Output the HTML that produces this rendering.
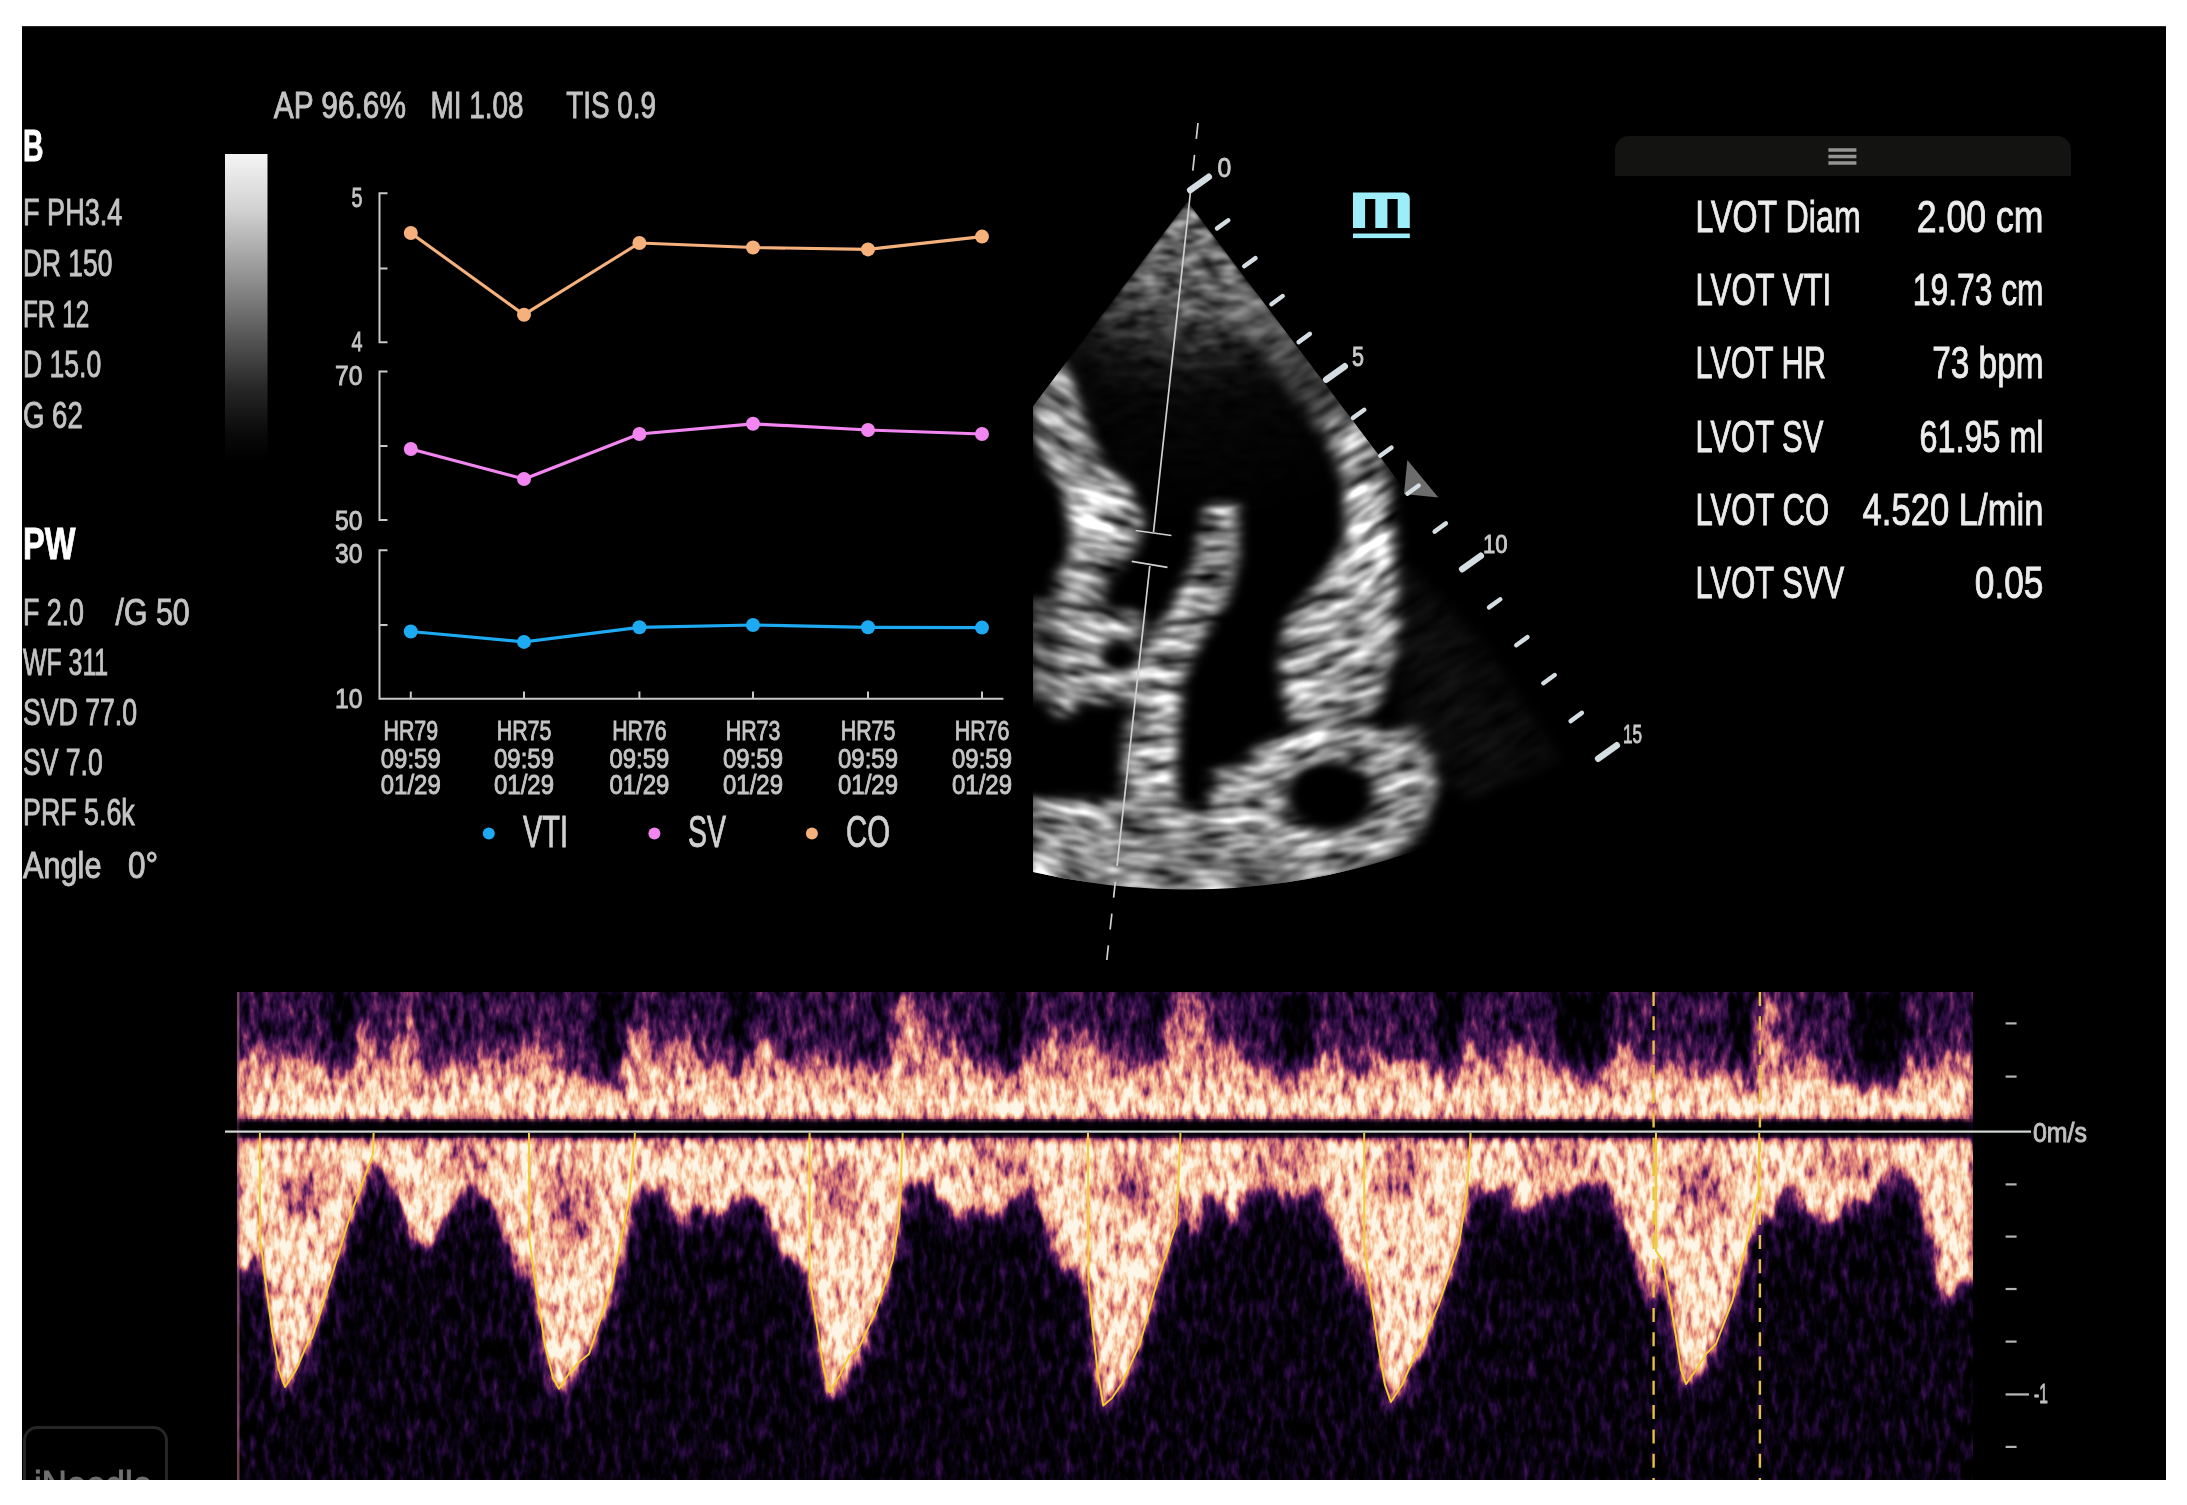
<!DOCTYPE html>
<html><head><meta charset="utf-8"><title>Ultrasound</title>
<style>
html,body{margin:0;padding:0;background:#fff;width:2187px;height:1505px;overflow:hidden}
svg{position:absolute;left:0;top:0;display:block}
text{font-family:"Liberation Sans",sans-serif;stroke-width:0.9px;paint-order:stroke}
</style></head><body>
<svg width="2187" height="1505" viewBox="0 0 2187 1505">
<defs><clipPath id="scr"><rect x="22" y="26" width="2144" height="1454"/></clipPath></defs>
<rect x="22" y="26" width="2144" height="1454" fill="#000"/>
<g clip-path="url(#scr)">
<defs>
<clipPath id="sect"><path d="M1187.5,201.5 L1033.0,406.5 L1033,871.9 A688,688 0 0 0 1601.5,751.0 Z"/></clipPath>
<radialGradient id="nearf" cx="1187.5" cy="201.5" r="330" gradientUnits="userSpaceOnUse">
<stop offset="0" stop-color="#7a7a7a"/><stop offset="0.2" stop-color="#646464"/><stop offset="0.32" stop-color="#505050"/><stop offset="0.42" stop-color="#2e2e2e"/><stop offset="0.52" stop-color="#121212"/><stop offset="0.62" stop-color="#060606"/><stop offset="1" stop-color="#000"/></radialGradient>
<filter id="eblur" x="800" y="0" width="1200" height="1200" filterUnits="userSpaceOnUse" color-interpolation-filters="sRGB"><feGaussianBlur stdDeviation="7 5"/></filter>
<filter id="etex" x="800" y="0" width="1200" height="1200" filterUnits="userSpaceOnUse" color-interpolation-filters="sRGB">
<feTurbulence type="fractalNoise" baseFrequency="0.026 0.075" numOctaves="2" seed="11" result="n"/>
<feColorMatrix in="n" type="matrix" values="1 0 0 0 0 1 0 0 0 0 1 0 0 0 0 0 0 0 0 1" result="ng"/>
<feComposite in="SourceGraphic" in2="ng" operator="arithmetic" k1="2.5" k2="-0.22" k3="0" k4="0"/>
<feColorMatrix type="matrix" values="1 0 0 0 0 0 1 0 0 0 0 0 1 0 0 0 0 0 0 1"/>
</filter>
<filter id="nftex" x="1020" y="190" width="600" height="720" filterUnits="userSpaceOnUse" color-interpolation-filters="sRGB">
<feTurbulence type="fractalNoise" baseFrequency="0.05 0.1" numOctaves="2" seed="5" result="n"/>
<feColorMatrix in="n" type="matrix" values="1 0 0 0 0 1 0 0 0 0 1 0 0 0 0 0 0 0 0 1" result="ng"/>
<feComposite in="SourceGraphic" in2="ng" operator="arithmetic" k1="2.6" k2="-0.3" k3="0" k4="0"/>
<feGaussianBlur stdDeviation="2 1.2"/>
</filter>
</defs>
<defs><filter id="mblur" x="800" y="0" width="1200" height="1200" filterUnits="userSpaceOnUse"><feGaussianBlur stdDeviation="10"/></filter><mask id="wdg1" maskUnits="userSpaceOnUse" x="800" y="0" width="1200" height="1200"><polygon points="1187.5,181.5 728.3,1310.2 1030.9,1391.2" fill="#fff" filter="url(#mblur)"/></mask><mask id="wdg2" maskUnits="userSpaceOnUse" x="800" y="0" width="1200" height="1200"><polygon points="1187.5,181.5 1344.1,1391.2 1646.7,1310.2" fill="#fff" filter="url(#mblur)"/></mask><mask id="wdg3" maskUnits="userSpaceOnUse" x="800" y="0" width="1200" height="1200"><polygon points="1187.5,181.5 148.3,801.5 728.3,1310.2" fill="#fff" filter="url(#mblur)"/></mask><mask id="wdg4" maskUnits="userSpaceOnUse" x="800" y="0" width="1200" height="1200"><polygon points="1187.5,181.5 1646.7,1310.2 2226.7,801.5" fill="#fff" filter="url(#mblur)"/></mask></defs>
<g clip-path="url(#sect)">
<g><g transform="rotate(0,1187.5,201.5)"><g filter="url(#etex)">
<g filter="url(#eblur)">
<rect x="800" y="0" width="1200" height="1200" fill="#000"/>
<g transform="rotate(0,1187.5,201.5)">
<polygon points="1230,290 1300,290 1400,440 1369,470 1320,430 1260,350 1228,320" fill="#3a3a3a"/>
<polygon points="1034,357 1034,440 1048,470 1060,490 1070,520 1070,552 1056,580 1054,612 1100,612 1106,582 1134,552 1143,520 1128,488 1098,455 1085,420 1075,385 1055,350" fill="#828282"/>
<polygon points="1070,480 1126,482 1142,520 1132,550 1080,552 1068,520" fill="#b6b6b6"/>
<polygon points="1054,608 1141,612 1141,700 1100,704 1060,700 1048,660" fill="#919191"/>
<polygon points="1030,600 1058,600 1060,700 1030,700" fill="#505050"/>
<polygon points="1207,505 1236,505 1238,560 1226,600 1200,640 1182,680 1176,740 1176,814 1122,814 1124,740 1136,690 1148,640 1176,600 1195,560" fill="#959595"/>
<polygon points="1320,420 1369,420 1389,480 1395,540 1397,580 1399,620 1395,660 1380,700 1360,722 1290,722 1284,700 1280,660 1286,619 1320,580 1345,540 1345,480" fill="#8f8f8f"/>
<polygon points="1355,480 1385,490 1390,560 1370,600 1345,600 1350,540" fill="#bbbbbb"/>
<polygon points="1399,559 1480,640 1560,760 1470,800 1400,740" fill="#0a0a0a"/>
<polygon points="1030,798 1116,800 1203,808 1240,770 1290,740 1350,725 1420,730 1440,780 1420,840 1380,860 1340,880 1200,900 1030,890" fill="#767676"/>
<polygon points="1030,800 1116,802 1116,880 1030,880" fill="#9c9c9c"/>
<polygon points="1212,770 1299,766 1299,852 1212,852" fill="#a3a3a3"/>
<ellipse cx="1332" cy="792" rx="100" ry="66" fill="#969696"/>
<ellipse cx="1330" cy="796" rx="45" ry="36" fill="#000"/>
<ellipse cx="1063" cy="709" rx="11" ry="9" fill="#a8a8a8"/>
<ellipse cx="1222" cy="511" rx="16" ry="7" fill="#c8c8c8"/>
<ellipse cx="1120" cy="656" rx="20" ry="16" fill="#000"/>
</g></g>
</g></g></g>
<g mask="url(#wdg1)"><g transform="rotate(15,1187.5,201.5)"><g filter="url(#etex)">
<g filter="url(#eblur)">
<rect x="800" y="0" width="1200" height="1200" fill="#000"/>
<g transform="rotate(-15,1187.5,201.5)">
<polygon points="1230,290 1300,290 1400,440 1369,470 1320,430 1260,350 1228,320" fill="#3a3a3a"/>
<polygon points="1034,357 1034,440 1048,470 1060,490 1070,520 1070,552 1056,580 1054,612 1100,612 1106,582 1134,552 1143,520 1128,488 1098,455 1085,420 1075,385 1055,350" fill="#828282"/>
<polygon points="1070,480 1126,482 1142,520 1132,550 1080,552 1068,520" fill="#b6b6b6"/>
<polygon points="1054,608 1141,612 1141,700 1100,704 1060,700 1048,660" fill="#919191"/>
<polygon points="1030,600 1058,600 1060,700 1030,700" fill="#505050"/>
<polygon points="1207,505 1236,505 1238,560 1226,600 1200,640 1182,680 1176,740 1176,814 1122,814 1124,740 1136,690 1148,640 1176,600 1195,560" fill="#959595"/>
<polygon points="1320,420 1369,420 1389,480 1395,540 1397,580 1399,620 1395,660 1380,700 1360,722 1290,722 1284,700 1280,660 1286,619 1320,580 1345,540 1345,480" fill="#8f8f8f"/>
<polygon points="1355,480 1385,490 1390,560 1370,600 1345,600 1350,540" fill="#bbbbbb"/>
<polygon points="1399,559 1480,640 1560,760 1470,800 1400,740" fill="#0a0a0a"/>
<polygon points="1030,798 1116,800 1203,808 1240,770 1290,740 1350,725 1420,730 1440,780 1420,840 1380,860 1340,880 1200,900 1030,890" fill="#767676"/>
<polygon points="1030,800 1116,802 1116,880 1030,880" fill="#9c9c9c"/>
<polygon points="1212,770 1299,766 1299,852 1212,852" fill="#a3a3a3"/>
<ellipse cx="1332" cy="792" rx="100" ry="66" fill="#969696"/>
<ellipse cx="1330" cy="796" rx="45" ry="36" fill="#000"/>
<ellipse cx="1063" cy="709" rx="11" ry="9" fill="#a8a8a8"/>
<ellipse cx="1222" cy="511" rx="16" ry="7" fill="#c8c8c8"/>
<ellipse cx="1120" cy="656" rx="20" ry="16" fill="#000"/>
</g></g>
</g></g></g>
<g mask="url(#wdg2)"><g transform="rotate(-15,1187.5,201.5)"><g filter="url(#etex)">
<g filter="url(#eblur)">
<rect x="800" y="0" width="1200" height="1200" fill="#000"/>
<g transform="rotate(15,1187.5,201.5)">
<polygon points="1230,290 1300,290 1400,440 1369,470 1320,430 1260,350 1228,320" fill="#3a3a3a"/>
<polygon points="1034,357 1034,440 1048,470 1060,490 1070,520 1070,552 1056,580 1054,612 1100,612 1106,582 1134,552 1143,520 1128,488 1098,455 1085,420 1075,385 1055,350" fill="#828282"/>
<polygon points="1070,480 1126,482 1142,520 1132,550 1080,552 1068,520" fill="#b6b6b6"/>
<polygon points="1054,608 1141,612 1141,700 1100,704 1060,700 1048,660" fill="#919191"/>
<polygon points="1030,600 1058,600 1060,700 1030,700" fill="#505050"/>
<polygon points="1207,505 1236,505 1238,560 1226,600 1200,640 1182,680 1176,740 1176,814 1122,814 1124,740 1136,690 1148,640 1176,600 1195,560" fill="#959595"/>
<polygon points="1320,420 1369,420 1389,480 1395,540 1397,580 1399,620 1395,660 1380,700 1360,722 1290,722 1284,700 1280,660 1286,619 1320,580 1345,540 1345,480" fill="#8f8f8f"/>
<polygon points="1355,480 1385,490 1390,560 1370,600 1345,600 1350,540" fill="#bbbbbb"/>
<polygon points="1399,559 1480,640 1560,760 1470,800 1400,740" fill="#0a0a0a"/>
<polygon points="1030,798 1116,800 1203,808 1240,770 1290,740 1350,725 1420,730 1440,780 1420,840 1380,860 1340,880 1200,900 1030,890" fill="#767676"/>
<polygon points="1030,800 1116,802 1116,880 1030,880" fill="#9c9c9c"/>
<polygon points="1212,770 1299,766 1299,852 1212,852" fill="#a3a3a3"/>
<ellipse cx="1332" cy="792" rx="100" ry="66" fill="#969696"/>
<ellipse cx="1330" cy="796" rx="45" ry="36" fill="#000"/>
<ellipse cx="1063" cy="709" rx="11" ry="9" fill="#a8a8a8"/>
<ellipse cx="1222" cy="511" rx="16" ry="7" fill="#c8c8c8"/>
<ellipse cx="1120" cy="656" rx="20" ry="16" fill="#000"/>
</g></g>
</g></g></g>
<g mask="url(#wdg3)"><g transform="rotate(30,1187.5,201.5)"><g filter="url(#etex)">
<g filter="url(#eblur)">
<rect x="800" y="0" width="1200" height="1200" fill="#000"/>
<g transform="rotate(-30,1187.5,201.5)">
<polygon points="1230,290 1300,290 1400,440 1369,470 1320,430 1260,350 1228,320" fill="#3a3a3a"/>
<polygon points="1034,357 1034,440 1048,470 1060,490 1070,520 1070,552 1056,580 1054,612 1100,612 1106,582 1134,552 1143,520 1128,488 1098,455 1085,420 1075,385 1055,350" fill="#828282"/>
<polygon points="1070,480 1126,482 1142,520 1132,550 1080,552 1068,520" fill="#b6b6b6"/>
<polygon points="1054,608 1141,612 1141,700 1100,704 1060,700 1048,660" fill="#919191"/>
<polygon points="1030,600 1058,600 1060,700 1030,700" fill="#505050"/>
<polygon points="1207,505 1236,505 1238,560 1226,600 1200,640 1182,680 1176,740 1176,814 1122,814 1124,740 1136,690 1148,640 1176,600 1195,560" fill="#959595"/>
<polygon points="1320,420 1369,420 1389,480 1395,540 1397,580 1399,620 1395,660 1380,700 1360,722 1290,722 1284,700 1280,660 1286,619 1320,580 1345,540 1345,480" fill="#8f8f8f"/>
<polygon points="1355,480 1385,490 1390,560 1370,600 1345,600 1350,540" fill="#bbbbbb"/>
<polygon points="1399,559 1480,640 1560,760 1470,800 1400,740" fill="#0a0a0a"/>
<polygon points="1030,798 1116,800 1203,808 1240,770 1290,740 1350,725 1420,730 1440,780 1420,840 1380,860 1340,880 1200,900 1030,890" fill="#767676"/>
<polygon points="1030,800 1116,802 1116,880 1030,880" fill="#9c9c9c"/>
<polygon points="1212,770 1299,766 1299,852 1212,852" fill="#a3a3a3"/>
<ellipse cx="1332" cy="792" rx="100" ry="66" fill="#969696"/>
<ellipse cx="1330" cy="796" rx="45" ry="36" fill="#000"/>
<ellipse cx="1063" cy="709" rx="11" ry="9" fill="#a8a8a8"/>
<ellipse cx="1222" cy="511" rx="16" ry="7" fill="#c8c8c8"/>
<ellipse cx="1120" cy="656" rx="20" ry="16" fill="#000"/>
</g></g>
</g></g></g>
<g mask="url(#wdg4)"><g transform="rotate(-30,1187.5,201.5)"><g filter="url(#etex)">
<g filter="url(#eblur)">
<rect x="800" y="0" width="1200" height="1200" fill="#000"/>
<g transform="rotate(30,1187.5,201.5)">
<polygon points="1230,290 1300,290 1400,440 1369,470 1320,430 1260,350 1228,320" fill="#3a3a3a"/>
<polygon points="1034,357 1034,440 1048,470 1060,490 1070,520 1070,552 1056,580 1054,612 1100,612 1106,582 1134,552 1143,520 1128,488 1098,455 1085,420 1075,385 1055,350" fill="#828282"/>
<polygon points="1070,480 1126,482 1142,520 1132,550 1080,552 1068,520" fill="#b6b6b6"/>
<polygon points="1054,608 1141,612 1141,700 1100,704 1060,700 1048,660" fill="#919191"/>
<polygon points="1030,600 1058,600 1060,700 1030,700" fill="#505050"/>
<polygon points="1207,505 1236,505 1238,560 1226,600 1200,640 1182,680 1176,740 1176,814 1122,814 1124,740 1136,690 1148,640 1176,600 1195,560" fill="#959595"/>
<polygon points="1320,420 1369,420 1389,480 1395,540 1397,580 1399,620 1395,660 1380,700 1360,722 1290,722 1284,700 1280,660 1286,619 1320,580 1345,540 1345,480" fill="#8f8f8f"/>
<polygon points="1355,480 1385,490 1390,560 1370,600 1345,600 1350,540" fill="#bbbbbb"/>
<polygon points="1399,559 1480,640 1560,760 1470,800 1400,740" fill="#0a0a0a"/>
<polygon points="1030,798 1116,800 1203,808 1240,770 1290,740 1350,725 1420,730 1440,780 1420,840 1380,860 1340,880 1200,900 1030,890" fill="#767676"/>
<polygon points="1030,800 1116,802 1116,880 1030,880" fill="#9c9c9c"/>
<polygon points="1212,770 1299,766 1299,852 1212,852" fill="#a3a3a3"/>
<ellipse cx="1332" cy="792" rx="100" ry="66" fill="#969696"/>
<ellipse cx="1330" cy="796" rx="45" ry="36" fill="#000"/>
<ellipse cx="1063" cy="709" rx="11" ry="9" fill="#a8a8a8"/>
<ellipse cx="1222" cy="511" rx="16" ry="7" fill="#c8c8c8"/>
<ellipse cx="1120" cy="656" rx="20" ry="16" fill="#000"/>
</g></g>
</g></g></g>
</g>
<g clip-path="url(#sect)" style="mix-blend-mode:screen"><g filter="url(#nftex)">
<rect x="1020" y="190" width="600" height="720" fill="#000"/><path d="M1187.5,201.5 L1033.0,406.5 L1033,871.9 A688,688 0 0 0 1601.5,751.0 Z" fill="url(#nearf)"/>
</g></g>
<g stroke="#d0d0d0" stroke-width="1.7" fill="none">
<path d="M1189.6,200 L1153.5,532"/>
<path d="M1149.8,566 L1118.8,850"/>
<path d="M1198.0,123 L1189.6,200 M1118.8,850 L1106.8,960" stroke-dasharray="16 16"/>
<path d="M1135.6,530.5 L1171.5,535.5 M1131.7,561.4 L1167.5,567.4"/>
</g>
<polygon points="1407.3,460 1438.4,497.5 1404,494" fill="#6c6c6c"/>
<g stroke="#d4dde2" stroke-linecap="round">
<path d="M1190.2,190.2 L1208.8,176.8" stroke-width="6.5"/>
<path d="M1217.0,228.4 L1228.3,220.2" stroke-width="4.4"/>
<path d="M1244.2,266.3 L1255.5,258.1" stroke-width="4.4"/>
<path d="M1271.4,304.2 L1282.7,296.0" stroke-width="4.4"/>
<path d="M1298.6,342.1 L1309.9,333.9" stroke-width="4.4"/>
<path d="M1326.2,379.7 L1344.8,366.3" stroke-width="6.5"/>
<path d="M1353.0,417.9 L1364.3,409.7" stroke-width="4.4"/>
<path d="M1380.2,455.8 L1391.5,447.6" stroke-width="4.4"/>
<path d="M1407.4,493.7 L1418.7,485.5" stroke-width="4.4"/>
<path d="M1434.6,531.6 L1445.9,523.4" stroke-width="4.4"/>
<path d="M1462.2,569.2 L1480.8,555.8" stroke-width="6.5"/>
<path d="M1489.0,607.4 L1500.3,599.2" stroke-width="4.4"/>
<path d="M1516.2,645.3 L1527.5,637.1" stroke-width="4.4"/>
<path d="M1543.4,683.2 L1554.7,675.0" stroke-width="4.4"/>
<path d="M1570.6,721.1 L1581.9,712.9" stroke-width="4.4"/>
<path d="M1598.2,758.7 L1616.8,745.3" stroke-width="6.5"/>
</g>
<defs>
<filter id="dmap" x="237" y="992" width="1736" height="488" filterUnits="userSpaceOnUse" color-interpolation-filters="sRGB">
<feTurbulence type="fractalNoise" baseFrequency="0.14 0.05" numOctaves="3" seed="7" result="n"/>
<feColorMatrix in="n" type="matrix" values="1 0 0 0 0 1 0 0 0 0 1 0 0 0 0 0 0 0 0 1" result="ng"/>
<feComposite in="SourceGraphic" in2="ng" operator="arithmetic" k1="0.7" k2="0.65" k3="0.55" k4="-0.275" result="c"/>
<feComponentTransfer in="c">
<feFuncR type="table" tableValues="0.000 0.047 0.141 0.251 0.416 0.627 0.816 0.922 0.965 0.984 0.996"/><feFuncG type="table" tableValues="0.000 0.016 0.039 0.082 0.145 0.282 0.439 0.604 0.753 0.878 0.961"/><feFuncB type="table" tableValues="0.000 0.086 0.220 0.314 0.376 0.439 0.459 0.510 0.604 0.753 0.902"/>
<feFuncA type="linear" slope="0" intercept="1"/></feComponentTransfer>
</filter>
<filter id="db1" x="-5%" y="-5%" width="110%" height="110%" color-interpolation-filters="sRGB"><feGaussianBlur stdDeviation="4 5"/></filter>
<filter id="db3" x="-50%" y="-50%" width="200%" height="200%" color-interpolation-filters="sRGB"><feGaussianBlur stdDeviation="11"/></filter>
<filter id="db2" x="-10%" y="-20%" width="120%" height="140%" color-interpolation-filters="sRGB"><feGaussianBlur stdDeviation="12"/></filter>
<linearGradient id="ugrad" x1="0" y1="992" x2="0" y2="1118" gradientUnits="userSpaceOnUse">
<stop offset="0" stop-color="#888888"/><stop offset="0.6" stop-color="#b0b0b0"/><stop offset="1" stop-color="#f2f2f2"/></linearGradient>
<clipPath id="dclip"><rect x="237" y="992" width="1736" height="488"/></clipPath>
</defs>
<g clip-path="url(#dclip)"><g filter="url(#dmap)">
<rect x="237" y="992" width="1736" height="488" fill="#101010"/>
<rect x="237" y="992" width="1736" height="130" fill="#3a3a3a"/>
<g filter="url(#db1)"><polygon points="330.0,992.0 357.0,992.0 357.0,1075.0 335.0,1070.0" fill="#000"/><polygon points="597.0,992.0 628.0,992.0 628.0,1090.0 600.0,1085.0" fill="#000"/><polygon points="729.0,992.0 751.0,992.0 750.0,1075.0 732.0,1070.0" fill="#000"/><polygon points="876.0,992.0 896.0,992.0 896.0,1070.0 880.0,1068.0" fill="#000"/><polygon points="997.0,992.0 1022.0,992.0 1020.0,1075.0 1000.0,1075.0" fill="#000"/><polygon points="1147.0,992.0 1173.0,992.0 1173.0,1065.0 1150.0,1065.0" fill="#000"/><polygon points="1279.0,992.0 1312.0,992.0 1310.0,1075.0 1282.0,1080.0" fill="#000"/><polygon points="1438.0,992.0 1464.0,992.0 1463.0,1085.0 1440.0,1070.0" fill="#000"/><polygon points="1554.0,992.0 1609.0,992.0 1605.0,1085.0 1560.0,1065.0" fill="#000"/><polygon points="1729.0,992.0 1758.0,992.0 1757.0,1085.0 1732.0,1078.0" fill="#000"/><polygon points="1852.0,992.0 1905.0,992.0 1903.0,1088.0 1858.0,1082.0" fill="#000"/></g>
<g filter="url(#db2)"><polygon points="237.0,1139.0 237.0,1274.0 250.0,1271.0 257.0,1250.0 260.0,1237.0 263.0,1260.0 272.0,1320.0 280.0,1375.0 287.0,1395.0 296.0,1370.0 308.0,1345.0 323.0,1304.0 336.0,1260.0 350.0,1217.0 362.0,1185.0 373.0,1164.0 386.0,1171.0 399.0,1198.0 413.0,1238.0 429.0,1251.0 442.0,1218.0 462.6,1191.0 476.0,1181.0 496.0,1211.0 512.5,1251.0 521.0,1281.0 529.0,1250.0 535.0,1290.0 545.0,1350.0 553.0,1385.0 559.0,1394.0 568.0,1385.0 582.0,1360.0 598.0,1330.0 612.0,1294.0 629.0,1224.0 637.0,1184.0 649.0,1191.0 662.0,1178.0 673.0,1218.0 683.0,1224.0 693.0,1198.0 716.5,1218.0 736.4,1198.0 749.7,1191.0 769.7,1218.0 786.3,1257.5 799.6,1261.0 809.6,1277.0 816.0,1317.0 822.0,1360.0 829.5,1400.0 840.0,1385.0 859.4,1357.0 876.0,1310.0 886.0,1284.0 902.6,1204.0 906.0,1184.0 929.0,1178.0 949.0,1211.0 959.0,1221.0 975.7,1201.0 992.0,1218.0 1009.0,1201.0 1029.0,1181.0 1045.5,1218.0 1062.0,1267.5 1075.4,1264.0 1088.0,1284.0 1093.0,1330.0 1098.0,1380.0 1103.0,1405.0 1121.6,1384.0 1139.9,1344.0 1156.5,1284.0 1176.4,1224.0 1181.4,1184.0 1189.7,1224.0 1196.0,1237.6 1206.0,1184.0 1229.6,1211.0 1233.0,1231.0 1246.0,1191.0 1266.0,1178.0 1286.0,1198.0 1309.0,1191.0 1316.0,1181.0 1329.0,1211.0 1346.0,1257.5 1356.0,1290.7 1364.0,1267.5 1375.8,1317.0 1383.0,1370.0 1390.0,1405.0 1400.0,1390.0 1422.0,1350.6 1455.6,1257.5 1469.0,1191.0 1472.0,1184.0 1489.0,1191.0 1505.4,1184.0 1522.0,1217.6 1540.0,1197.7 1563.0,1191.0 1586.0,1184.0 1606.0,1178.0 1619.7,1211.0 1633.0,1244.0 1646.0,1290.6 1654.5,1304.0 1660.0,1265.0 1666.0,1274.0 1676.0,1337.0 1686.0,1390.0 1712.7,1350.0 1736.0,1290.6 1759.0,1211.0 1772.5,1224.0 1776.0,1197.6 1786.0,1184.0 1809.0,1211.0 1832.0,1224.0 1852.0,1197.6 1872.0,1201.0 1888.7,1171.0 1905.0,1171.0 1918.7,1191.0 1932.0,1237.5 1942.0,1304.0 1952.0,1290.6 1965.0,1277.0 1973.0,1290.0 1973.0,1139.0" fill="#5a5a5a" transform="translate(0,10)"/><polygon points="237.0,1118.0 237.0,1067.0 257.0,1048.0 271.0,1067.0 290.0,1054.0 312.0,1062.0 334.0,1075.5 351.0,1081.0 358.0,1026.0 368.0,1026.0 378.0,1067.0 394.6,1054.0 405.0,1003.0 411.0,1003.0 419.0,1081.0 438.5,1075.5 449.5,1062.0 466.0,1073.0 485.0,1054.0 504.0,1067.0 521.0,1054.0 540.0,1040.0 559.0,1067.0 581.0,1075.5 600.0,1089.0 619.6,1095.0 629.0,1026.0 645.0,1030.0 658.0,1067.0 668.0,1060.0 680.0,1033.0 702.0,1067.0 724.0,1062.0 742.0,1081.0 753.0,1050.0 762.0,1035.0 779.0,1062.0 797.0,1074.0 812.0,1055.0 832.0,1067.0 860.0,1075.0 887.0,1075.5 897.0,996.0 912.0,996.0 936.0,1054.0 950.0,1040.0 983.0,1075.5 1010.0,1081.0 1021.0,1067.0 1038.0,1054.0 1051.5,1026.0 1068.0,1067.0 1079.0,1034.0 1101.0,1054.0 1130.0,1070.0 1161.0,1067.0 1174.0,993.0 1197.0,993.0 1216.0,1062.0 1230.0,1040.0 1246.5,1067.0 1265.7,1075.5 1285.0,1084.0 1306.8,1075.5 1323.0,1054.0 1339.7,1059.0 1353.5,1084.0 1375.4,1054.0 1394.6,1067.0 1416.6,1062.0 1438.5,1073.0 1457.7,1089.0 1465.0,1032.0 1477.0,1054.0 1493.0,1073.0 1515.0,1045.0 1531.8,1054.0 1553.7,1067.0 1575.7,1081.0 1597.6,1089.0 1614.0,1062.0 1625.0,1040.0 1641.5,1067.0 1658.0,1073.0 1674.4,1062.0 1696.4,1081.0 1718.3,1067.0 1740.3,1081.0 1756.0,1091.0 1759.0,998.0 1776.0,1003.0 1785.0,1071.0 1799.5,1065.0 1808.7,1038.0 1819.0,1065.0 1832.6,1084.5 1859.0,1091.0 1899.0,1091.0 1907.0,1058.0 1918.8,1065.0 1932.0,1078.0 1952.0,1051.0 1973.0,1058.0 1973.0,1118.0" fill="#707070" transform="translate(0,-12)"/></g>
<g filter="url(#db1)"><polygon points="237.0,1139.0 237.0,1274.0 250.0,1271.0 257.0,1250.0 260.0,1237.0 263.0,1260.0 272.0,1320.0 280.0,1375.0 287.0,1395.0 296.0,1370.0 308.0,1345.0 323.0,1304.0 336.0,1260.0 350.0,1217.0 362.0,1185.0 373.0,1164.0 386.0,1171.0 399.0,1198.0 413.0,1238.0 429.0,1251.0 442.0,1218.0 462.6,1191.0 476.0,1181.0 496.0,1211.0 512.5,1251.0 521.0,1281.0 529.0,1250.0 535.0,1290.0 545.0,1350.0 553.0,1385.0 559.0,1394.0 568.0,1385.0 582.0,1360.0 598.0,1330.0 612.0,1294.0 629.0,1224.0 637.0,1184.0 649.0,1191.0 662.0,1178.0 673.0,1218.0 683.0,1224.0 693.0,1198.0 716.5,1218.0 736.4,1198.0 749.7,1191.0 769.7,1218.0 786.3,1257.5 799.6,1261.0 809.6,1277.0 816.0,1317.0 822.0,1360.0 829.5,1400.0 840.0,1385.0 859.4,1357.0 876.0,1310.0 886.0,1284.0 902.6,1204.0 906.0,1184.0 929.0,1178.0 949.0,1211.0 959.0,1221.0 975.7,1201.0 992.0,1218.0 1009.0,1201.0 1029.0,1181.0 1045.5,1218.0 1062.0,1267.5 1075.4,1264.0 1088.0,1284.0 1093.0,1330.0 1098.0,1380.0 1103.0,1405.0 1121.6,1384.0 1139.9,1344.0 1156.5,1284.0 1176.4,1224.0 1181.4,1184.0 1189.7,1224.0 1196.0,1237.6 1206.0,1184.0 1229.6,1211.0 1233.0,1231.0 1246.0,1191.0 1266.0,1178.0 1286.0,1198.0 1309.0,1191.0 1316.0,1181.0 1329.0,1211.0 1346.0,1257.5 1356.0,1290.7 1364.0,1267.5 1375.8,1317.0 1383.0,1370.0 1390.0,1405.0 1400.0,1390.0 1422.0,1350.6 1455.6,1257.5 1469.0,1191.0 1472.0,1184.0 1489.0,1191.0 1505.4,1184.0 1522.0,1217.6 1540.0,1197.7 1563.0,1191.0 1586.0,1184.0 1606.0,1178.0 1619.7,1211.0 1633.0,1244.0 1646.0,1290.6 1654.5,1304.0 1660.0,1265.0 1666.0,1274.0 1676.0,1337.0 1686.0,1390.0 1712.7,1350.0 1736.0,1290.6 1759.0,1211.0 1772.5,1224.0 1776.0,1197.6 1786.0,1184.0 1809.0,1211.0 1832.0,1224.0 1852.0,1197.6 1872.0,1201.0 1888.7,1171.0 1905.0,1171.0 1918.7,1191.0 1932.0,1237.5 1942.0,1304.0 1952.0,1290.6 1965.0,1277.0 1973.0,1290.0 1973.0,1139.0" fill="#e0e0e0"/><polygon points="237.0,1118.0 237.0,1067.0 257.0,1048.0 271.0,1067.0 290.0,1054.0 312.0,1062.0 334.0,1075.5 351.0,1081.0 358.0,1026.0 368.0,1026.0 378.0,1067.0 394.6,1054.0 405.0,1003.0 411.0,1003.0 419.0,1081.0 438.5,1075.5 449.5,1062.0 466.0,1073.0 485.0,1054.0 504.0,1067.0 521.0,1054.0 540.0,1040.0 559.0,1067.0 581.0,1075.5 600.0,1089.0 619.6,1095.0 629.0,1026.0 645.0,1030.0 658.0,1067.0 668.0,1060.0 680.0,1033.0 702.0,1067.0 724.0,1062.0 742.0,1081.0 753.0,1050.0 762.0,1035.0 779.0,1062.0 797.0,1074.0 812.0,1055.0 832.0,1067.0 860.0,1075.0 887.0,1075.5 897.0,996.0 912.0,996.0 936.0,1054.0 950.0,1040.0 983.0,1075.5 1010.0,1081.0 1021.0,1067.0 1038.0,1054.0 1051.5,1026.0 1068.0,1067.0 1079.0,1034.0 1101.0,1054.0 1130.0,1070.0 1161.0,1067.0 1174.0,993.0 1197.0,993.0 1216.0,1062.0 1230.0,1040.0 1246.5,1067.0 1265.7,1075.5 1285.0,1084.0 1306.8,1075.5 1323.0,1054.0 1339.7,1059.0 1353.5,1084.0 1375.4,1054.0 1394.6,1067.0 1416.6,1062.0 1438.5,1073.0 1457.7,1089.0 1465.0,1032.0 1477.0,1054.0 1493.0,1073.0 1515.0,1045.0 1531.8,1054.0 1553.7,1067.0 1575.7,1081.0 1597.6,1089.0 1614.0,1062.0 1625.0,1040.0 1641.5,1067.0 1658.0,1073.0 1674.4,1062.0 1696.4,1081.0 1718.3,1067.0 1740.3,1081.0 1756.0,1091.0 1759.0,998.0 1776.0,1003.0 1785.0,1071.0 1799.5,1065.0 1808.7,1038.0 1819.0,1065.0 1832.6,1084.5 1859.0,1091.0 1899.0,1091.0 1907.0,1058.0 1918.8,1065.0 1932.0,1078.0 1952.0,1051.0 1973.0,1058.0 1973.0,1118.0" fill="url(#ugrad)"/></g>
<g filter="url(#db3)">
<ellipse cx="305" cy="1190" rx="25" ry="30" fill="#8c8c8c"/>
<ellipse cx="571" cy="1205" rx="25" ry="45" fill="#8c8c8c"/>
<ellipse cx="838" cy="1190" rx="22" ry="30" fill="#8c8c8c"/>
<ellipse cx="1133" cy="1185" rx="23" ry="34" fill="#8c8c8c"/>
<ellipse cx="1400" cy="1172" rx="22" ry="30" fill="#8c8c8c"/>
<ellipse cx="1701" cy="1190" rx="25" ry="34" fill="#8c8c8c"/>
<ellipse cx="470" cy="1160" rx="30" ry="14" fill="#8c8c8c"/>
<ellipse cx="1000" cy="1165" rx="35" ry="15" fill="#8c8c8c"/>
<ellipse cx="1280" cy="1160" rx="40" ry="15" fill="#8c8c8c"/>
<ellipse cx="1560" cy="1162" rx="40" ry="14" fill="#8c8c8c"/>
<ellipse cx="1850" cy="1165" rx="40" ry="14" fill="#8c8c8c"/>
</g>
</g></g>
<rect x="237" y="992" width="2.5" height="488" fill="#c07088" opacity="0.55"/>
<g filter="url(#db1)"><rect x="237" y="1120" width="1736" height="17" fill="#000"/></g>
<rect x="225" y="1130.5" width="1806" height="2.2" fill="#d4d8d4"/>
<polyline points="259.9,1133.0 259.9,1237.0 264.0,1270.0 272.0,1330.0 279.0,1370.0 285.0,1387.0 296.0,1370.0 308.0,1342.0 312.0,1338.0 323.0,1304.0 349.6,1217.6 372.9,1154.5 373.6,1133.0" fill="none" stroke="#f2cc30" stroke-width="2" stroke-linejoin="round"/>
<polyline points="529.0,1133.0 529.5,1240.0 535.0,1280.0 545.0,1345.0 553.0,1378.0 559.0,1388.8 570.0,1372.0 579.0,1362.0 589.0,1354.0 612.0,1284.0 628.8,1201.0 634.8,1136.0 634.8,1133.0" fill="none" stroke="#f2cc30" stroke-width="2" stroke-linejoin="round"/>
<polyline points="809.6,1133.0 809.6,1277.0 816.0,1320.0 823.0,1365.0 829.5,1392.0 840.0,1375.0 849.4,1355.5 859.4,1347.0 876.0,1310.7 892.6,1260.8 899.3,1217.6 902.6,1136.0 902.6,1133.0" fill="none" stroke="#f2cc30" stroke-width="2" stroke-linejoin="round"/>
<polyline points="1088.0,1133.0 1088.5,1284.0 1093.0,1330.0 1098.0,1375.0 1103.3,1405.4 1112.0,1398.0 1121.6,1384.0 1139.9,1344.0 1156.5,1284.0 1176.4,1224.0 1180.4,1136.0 1180.4,1133.0" fill="none" stroke="#f2cc30" stroke-width="2" stroke-linejoin="round"/>
<polyline points="1364.2,1133.0 1364.2,1244.0 1370.0,1290.0 1378.0,1345.0 1385.0,1385.0 1390.8,1402.0 1402.0,1385.0 1414.0,1357.0 1419.0,1350.6 1439.0,1304.0 1459.0,1244.0 1467.0,1191.0 1470.5,1136.0 1470.5,1133.0" fill="none" stroke="#f2cc30" stroke-width="2" stroke-linejoin="round"/>
<polyline points="1656.0,1133.0 1656.0,1251.0 1663.0,1261.0 1670.0,1300.0 1676.0,1337.0 1681.0,1370.0 1686.0,1384.0 1696.0,1370.0 1706.0,1354.0 1716.0,1344.0 1732.6,1300.6 1752.6,1217.6 1758.5,1191.0 1759.2,1136.0 1759.2,1133.0" fill="none" stroke="#f2cc30" stroke-width="2" stroke-linejoin="round"/>
<g fill="#b4b4b4">
<rect x="2005.6" y="1022.3" width="11" height="2.2"/>
<rect x="2005.6" y="1075.5" width="11" height="2.2"/>
<rect x="2005.6" y="1183.3" width="11" height="2.2"/>
<rect x="2005.6" y="1235.5" width="11" height="2.2"/>
<rect x="2005.6" y="1287.9" width="11" height="2.2"/>
<rect x="2005.6" y="1340.5" width="11" height="2.2"/>
<rect x="2005.6" y="1445.8" width="11" height="2.2"/>
<rect x="2005.6" y="1393.3" width="23.4" height="2.3"/>
</g>
<g stroke="#e8c040" stroke-width="2.4" stroke-dasharray="14 10.3"><path d="M1653.6,992V1480"/><path d="M1759.9,992V1480"/></g>
<text x="23.00" y="160.70" font-size="44.33" textLength="20.49" lengthAdjust="spacingAndGlyphs" fill="#ffffff" stroke="#ffffff" font-weight="bold" >B</text>
<text x="23.00" y="225.30" font-size="36.34" textLength="99.36" lengthAdjust="spacingAndGlyphs" fill="#c4c4c4" stroke="#c4c4c4" >F PH3.4</text>
<text x="23.00" y="275.50" font-size="36.34" textLength="89.29" lengthAdjust="spacingAndGlyphs" fill="#c4c4c4" stroke="#c4c4c4" >DR 150</text>
<text x="23.00" y="326.90" font-size="36.34" textLength="66.17" lengthAdjust="spacingAndGlyphs" fill="#c4c4c4" stroke="#c4c4c4" >FR 12</text>
<text x="23.00" y="377.20" font-size="36.34" textLength="78.17" lengthAdjust="spacingAndGlyphs" fill="#c4c4c4" stroke="#c4c4c4" >D 15.0</text>
<text x="23.00" y="427.50" font-size="36.34" textLength="59.70" lengthAdjust="spacingAndGlyphs" fill="#c4c4c4" stroke="#c4c4c4" >G 62</text>
<text x="23.00" y="559.00" font-size="44.33" textLength="52.47" lengthAdjust="spacingAndGlyphs" fill="#ffffff" stroke="#ffffff" font-weight="bold" >PW</text>
<text x="23.00" y="624.50" font-size="36.34" textLength="61.02" lengthAdjust="spacingAndGlyphs" fill="#c4c4c4" stroke="#c4c4c4" >F 2.0</text>
<text x="23.00" y="674.70" font-size="36.34" textLength="85.20" lengthAdjust="spacingAndGlyphs" fill="#c4c4c4" stroke="#c4c4c4" >WF 311</text>
<text x="23.00" y="724.90" font-size="36.34" textLength="113.98" lengthAdjust="spacingAndGlyphs" fill="#c4c4c4" stroke="#c4c4c4" >SVD 77.0</text>
<text x="23.00" y="775.10" font-size="36.34" textLength="79.78" lengthAdjust="spacingAndGlyphs" fill="#c4c4c4" stroke="#c4c4c4" >SV 7.0</text>
<text x="23.00" y="825.40" font-size="36.34" textLength="111.75" lengthAdjust="spacingAndGlyphs" fill="#c4c4c4" stroke="#c4c4c4" >PRF 5.6k</text>
<text x="23.00" y="878.40" font-size="36.34" textLength="78.44" lengthAdjust="spacingAndGlyphs" fill="#c4c4c4" stroke="#c4c4c4" >Angle</text>
<text x="115.60" y="624.50" font-size="36.34" textLength="73.99" lengthAdjust="spacingAndGlyphs" fill="#c4c4c4" stroke="#c4c4c4" >/G 50</text>
<text x="127.90" y="878.40" font-size="36.34" textLength="30.11" lengthAdjust="spacingAndGlyphs" fill="#c4c4c4" stroke="#c4c4c4" >0°</text>
<text x="273.80" y="118.40" font-size="36.34" textLength="132.19" lengthAdjust="spacingAndGlyphs" fill="#c4c4c4" stroke="#c4c4c4" >AP 96.6%</text>
<text x="430.50" y="118.40" font-size="36.34" textLength="92.97" lengthAdjust="spacingAndGlyphs" fill="#c4c4c4" stroke="#c4c4c4" >MI 1.08</text>
<text x="566.30" y="118.40" font-size="36.34" textLength="89.72" lengthAdjust="spacingAndGlyphs" fill="#c4c4c4" stroke="#c4c4c4" >TIS 0.9</text>
<defs><linearGradient id="gbar" x1="0" y1="0" x2="0" y2="1">
<stop offset="0" stop-color="#f4f4f4"/><stop offset="0.18" stop-color="#d2d2d2"/>
<stop offset="0.40" stop-color="#929292"/><stop offset="0.62" stop-color="#505050"/>
<stop offset="0.76" stop-color="#282828"/><stop offset="0.91" stop-color="#0a0a0a"/>
<stop offset="1" stop-color="#000"/></linearGradient></defs>
<rect x="225" y="154" width="42.5" height="306" fill="url(#gbar)"/>
<g fill="none" stroke="#c8c8c8" stroke-width="2"><path d="M387.5,193.2H379.5V342.3H387.5M379.5,268.5H387.5"/><path d="M387.5,371.6H379.5V520H387.5M379.5,446H387.5"/><path d="M387.5,550.3H379.5V698.7H1003.4M379.5,625H387.5"/>
<path d="M410.8,691.5V698.7"/>
<path d="M524,691.5V698.7"/>
<path d="M639.4,691.5V698.7"/>
<path d="M753,691.5V698.7"/>
<path d="M868,691.5V698.7"/>
<path d="M982,691.5V698.7"/>
</g>
<text x="351.40" y="207.00" font-size="27.62" textLength="10.96" lengthAdjust="spacingAndGlyphs" fill="#c4c4c4" stroke="#c4c4c4" >5</text>
<text x="351.40" y="351.00" font-size="27.62" textLength="10.96" lengthAdjust="spacingAndGlyphs" fill="#c4c4c4" stroke="#c4c4c4" >4</text>
<text x="335.00" y="384.70" font-size="27.62" textLength="27.40" lengthAdjust="spacingAndGlyphs" fill="#c4c4c4" stroke="#c4c4c4" >70</text>
<text x="335.00" y="529.90" font-size="27.62" textLength="27.40" lengthAdjust="spacingAndGlyphs" fill="#c4c4c4" stroke="#c4c4c4" >50</text>
<text x="335.00" y="563.30" font-size="27.62" textLength="27.40" lengthAdjust="spacingAndGlyphs" fill="#c4c4c4" stroke="#c4c4c4" >30</text>
<text x="335.00" y="707.80" font-size="27.62" textLength="27.40" lengthAdjust="spacingAndGlyphs" fill="#c4c4c4" stroke="#c4c4c4" >10</text>
<path d="M410.8,233 L524,314.7 L639.4,243 L753,247.5 L868,249.4 L982,236.6" fill="none" stroke="#f6b07c" stroke-width="3.2" stroke-linejoin="round"/><circle cx="410.8" cy="233" r="7" fill="#f6b07c"/><circle cx="524" cy="314.7" r="7" fill="#f6b07c"/><circle cx="639.4" cy="243" r="7" fill="#f6b07c"/><circle cx="753" cy="247.5" r="7" fill="#f6b07c"/><circle cx="868" cy="249.4" r="7" fill="#f6b07c"/><circle cx="982" cy="236.6" r="7" fill="#f6b07c"/>
<path d="M410.8,449 L524,479 L639.4,434 L753,423.8 L868,430 L982,434" fill="none" stroke="#f286f0" stroke-width="3.2" stroke-linejoin="round"/><circle cx="410.8" cy="449" r="7" fill="#f286f0"/><circle cx="524" cy="479" r="7" fill="#f286f0"/><circle cx="639.4" cy="434" r="7" fill="#f286f0"/><circle cx="753" cy="423.8" r="7" fill="#f286f0"/><circle cx="868" cy="430" r="7" fill="#f286f0"/><circle cx="982" cy="434" r="7" fill="#f286f0"/>
<path d="M410.8,631.5 L524,641.9 L639.4,627.3 L753,625 L868,627.3 L982,627.6" fill="none" stroke="#1eaaf2" stroke-width="3.2" stroke-linejoin="round"/><circle cx="410.8" cy="631.5" r="7" fill="#1eaaf2"/><circle cx="524" cy="641.9" r="7" fill="#1eaaf2"/><circle cx="639.4" cy="627.3" r="7" fill="#1eaaf2"/><circle cx="753" cy="625" r="7" fill="#1eaaf2"/><circle cx="868" cy="627.3" r="7" fill="#1eaaf2"/><circle cx="982" cy="627.6" r="7" fill="#1eaaf2"/>
<text x="383.55" y="739.90" font-size="27.18" textLength="54.53" lengthAdjust="spacingAndGlyphs" fill="#c4c4c4" stroke="#c4c4c4" >HR79</text>
<text x="380.80" y="767.90" font-size="27.18" textLength="59.97" lengthAdjust="spacingAndGlyphs" fill="#c4c4c4" stroke="#c4c4c4" >09:59</text>
<text x="380.80" y="794.30" font-size="27.18" textLength="59.97" lengthAdjust="spacingAndGlyphs" fill="#c4c4c4" stroke="#c4c4c4" >01/29</text>
<text x="496.75" y="739.90" font-size="27.18" textLength="54.53" lengthAdjust="spacingAndGlyphs" fill="#c4c4c4" stroke="#c4c4c4" >HR75</text>
<text x="494.00" y="767.90" font-size="27.18" textLength="59.97" lengthAdjust="spacingAndGlyphs" fill="#c4c4c4" stroke="#c4c4c4" >09:59</text>
<text x="494.00" y="794.30" font-size="27.18" textLength="59.97" lengthAdjust="spacingAndGlyphs" fill="#c4c4c4" stroke="#c4c4c4" >01/29</text>
<text x="612.15" y="739.90" font-size="27.18" textLength="54.53" lengthAdjust="spacingAndGlyphs" fill="#c4c4c4" stroke="#c4c4c4" >HR76</text>
<text x="609.40" y="767.90" font-size="27.18" textLength="59.97" lengthAdjust="spacingAndGlyphs" fill="#c4c4c4" stroke="#c4c4c4" >09:59</text>
<text x="609.40" y="794.30" font-size="27.18" textLength="59.97" lengthAdjust="spacingAndGlyphs" fill="#c4c4c4" stroke="#c4c4c4" >01/29</text>
<text x="725.75" y="739.90" font-size="27.18" textLength="54.53" lengthAdjust="spacingAndGlyphs" fill="#c4c4c4" stroke="#c4c4c4" >HR73</text>
<text x="723.00" y="767.90" font-size="27.18" textLength="59.97" lengthAdjust="spacingAndGlyphs" fill="#c4c4c4" stroke="#c4c4c4" >09:59</text>
<text x="723.00" y="794.30" font-size="27.18" textLength="59.97" lengthAdjust="spacingAndGlyphs" fill="#c4c4c4" stroke="#c4c4c4" >01/29</text>
<text x="840.75" y="739.90" font-size="27.18" textLength="54.53" lengthAdjust="spacingAndGlyphs" fill="#c4c4c4" stroke="#c4c4c4" >HR75</text>
<text x="838.00" y="767.90" font-size="27.18" textLength="59.97" lengthAdjust="spacingAndGlyphs" fill="#c4c4c4" stroke="#c4c4c4" >09:59</text>
<text x="838.00" y="794.30" font-size="27.18" textLength="59.97" lengthAdjust="spacingAndGlyphs" fill="#c4c4c4" stroke="#c4c4c4" >01/29</text>
<text x="954.75" y="739.90" font-size="27.18" textLength="54.53" lengthAdjust="spacingAndGlyphs" fill="#c4c4c4" stroke="#c4c4c4" >HR76</text>
<text x="952.00" y="767.90" font-size="27.18" textLength="59.97" lengthAdjust="spacingAndGlyphs" fill="#c4c4c4" stroke="#c4c4c4" >09:59</text>
<text x="952.00" y="794.30" font-size="27.18" textLength="59.97" lengthAdjust="spacingAndGlyphs" fill="#c4c4c4" stroke="#c4c4c4" >01/29</text>
<circle cx="488.8" cy="833.4" r="6" fill="#1eaaf2"/>
<text x="523.00" y="846.80" font-size="43.60" textLength="45.02" lengthAdjust="spacingAndGlyphs" fill="#d0d0d0" stroke="#d0d0d0" >VTI</text>
<circle cx="654.4" cy="833.4" r="6" fill="#f286f0"/>
<text x="688.00" y="846.80" font-size="43.60" textLength="37.98" lengthAdjust="spacingAndGlyphs" fill="#d0d0d0" stroke="#d0d0d0" >SV</text>
<circle cx="811.9" cy="833.4" r="6" fill="#f6b07c"/>
<text x="846.00" y="846.80" font-size="43.60" textLength="44.00" lengthAdjust="spacingAndGlyphs" fill="#d0d0d0" stroke="#d0d0d0" >CO</text>
<path d="M1615,176V150A14,14 0 0 1 1629,136H2057A14,14 0 0 1 2071,150V176Z" fill="#131311"/>
<g stroke="#959595" stroke-width="3.4"><path d="M1828.4,150H1856.4M1828.4,156.5H1856.4M1828.4,163H1856.4"/></g>
<text x="1695.60" y="231.70" font-size="45.06" textLength="165.10" lengthAdjust="spacingAndGlyphs" fill="#ececec" stroke="#ececec" >LVOT Diam</text>
<text x="1916.70" y="231.70" font-size="45.06" textLength="126.82" lengthAdjust="spacingAndGlyphs" fill="#ececec" stroke="#ececec" >2.00 cm</text>
<text x="1695.60" y="305.04" font-size="45.06" textLength="135.61" lengthAdjust="spacingAndGlyphs" fill="#ececec" stroke="#ececec" >LVOT VTI</text>
<text x="1912.80" y="305.04" font-size="45.06" textLength="130.71" lengthAdjust="spacingAndGlyphs" fill="#ececec" stroke="#ececec" >19.73 cm</text>
<text x="1695.60" y="378.38" font-size="45.06" textLength="130.40" lengthAdjust="spacingAndGlyphs" fill="#ececec" stroke="#ececec" >LVOT HR</text>
<text x="1932.20" y="378.38" font-size="45.06" textLength="111.32" lengthAdjust="spacingAndGlyphs" fill="#ececec" stroke="#ececec" >73 bpm</text>
<text x="1695.60" y="451.72" font-size="45.06" textLength="127.72" lengthAdjust="spacingAndGlyphs" fill="#ececec" stroke="#ececec" >LVOT SV</text>
<text x="1919.60" y="451.72" font-size="45.06" textLength="123.89" lengthAdjust="spacingAndGlyphs" fill="#ececec" stroke="#ececec" >61.95 ml</text>
<text x="1695.60" y="525.06" font-size="45.06" textLength="133.61" lengthAdjust="spacingAndGlyphs" fill="#ececec" stroke="#ececec" >LVOT CO</text>
<text x="1862.50" y="525.06" font-size="45.06" textLength="180.98" lengthAdjust="spacingAndGlyphs" fill="#ececec" stroke="#ececec" >4.520 L/min</text>
<text x="1695.60" y="598.40" font-size="45.06" textLength="148.60" lengthAdjust="spacingAndGlyphs" fill="#ececec" stroke="#ececec" >LVOT SVV</text>
<text x="1974.80" y="598.40" font-size="45.06" textLength="68.68" lengthAdjust="spacingAndGlyphs" fill="#ececec" stroke="#ececec" >0.05</text>
<rect x="24.5" y="1427.5" width="142" height="80" rx="13" fill="none" stroke="#262626" stroke-width="3"/>
<text x="34.00" y="1497.00" font-size="36.34" textLength="118.00" lengthAdjust="spacingAndGlyphs" fill="#707070" stroke="#707070" >iNeedle</text>
<text x="1217.40" y="177.40" font-size="27.62" textLength="13.76" lengthAdjust="spacingAndGlyphs" fill="#c8c8c8" stroke="#c8c8c8" >0</text>
<text x="1352.00" y="366.00" font-size="27.62" textLength="11.96" lengthAdjust="spacingAndGlyphs" fill="#c8c8c8" stroke="#c8c8c8" >5</text>
<text x="1483.00" y="552.80" font-size="26.16" textLength="24.54" lengthAdjust="spacingAndGlyphs" fill="#c8c8c8" stroke="#c8c8c8" >10</text>
<text x="1623.00" y="743.00" font-size="26.16" textLength="19.03" lengthAdjust="spacingAndGlyphs" fill="#c8c8c8" stroke="#c8c8c8" >15</text>
<path d="M1353,228V192.6H1403.8A6,6 0 0 1 1409.8,198.6V228H1397.7V199H1387.4V228H1375.3V199H1365.1V228Z" fill="#9eeefa"/>
<rect x="1353" y="233.5" width="56.8" height="4.6" fill="#9eeefa"/>
<text x="2033.00" y="1142.20" font-size="27.33" textLength="53.96" lengthAdjust="spacingAndGlyphs" fill="#c0c0c0" stroke="#c0c0c0" >0m/s</text>
<text x="2034.00" y="1403.00" font-size="27.62" textLength="13.82" lengthAdjust="spacingAndGlyphs" fill="#c0c0c0" stroke="#c0c0c0" >-1</text>
</g>
<rect x="22" y="26" width="2144" height="1" fill="#2a2a2a"/>
</svg></body></html>
